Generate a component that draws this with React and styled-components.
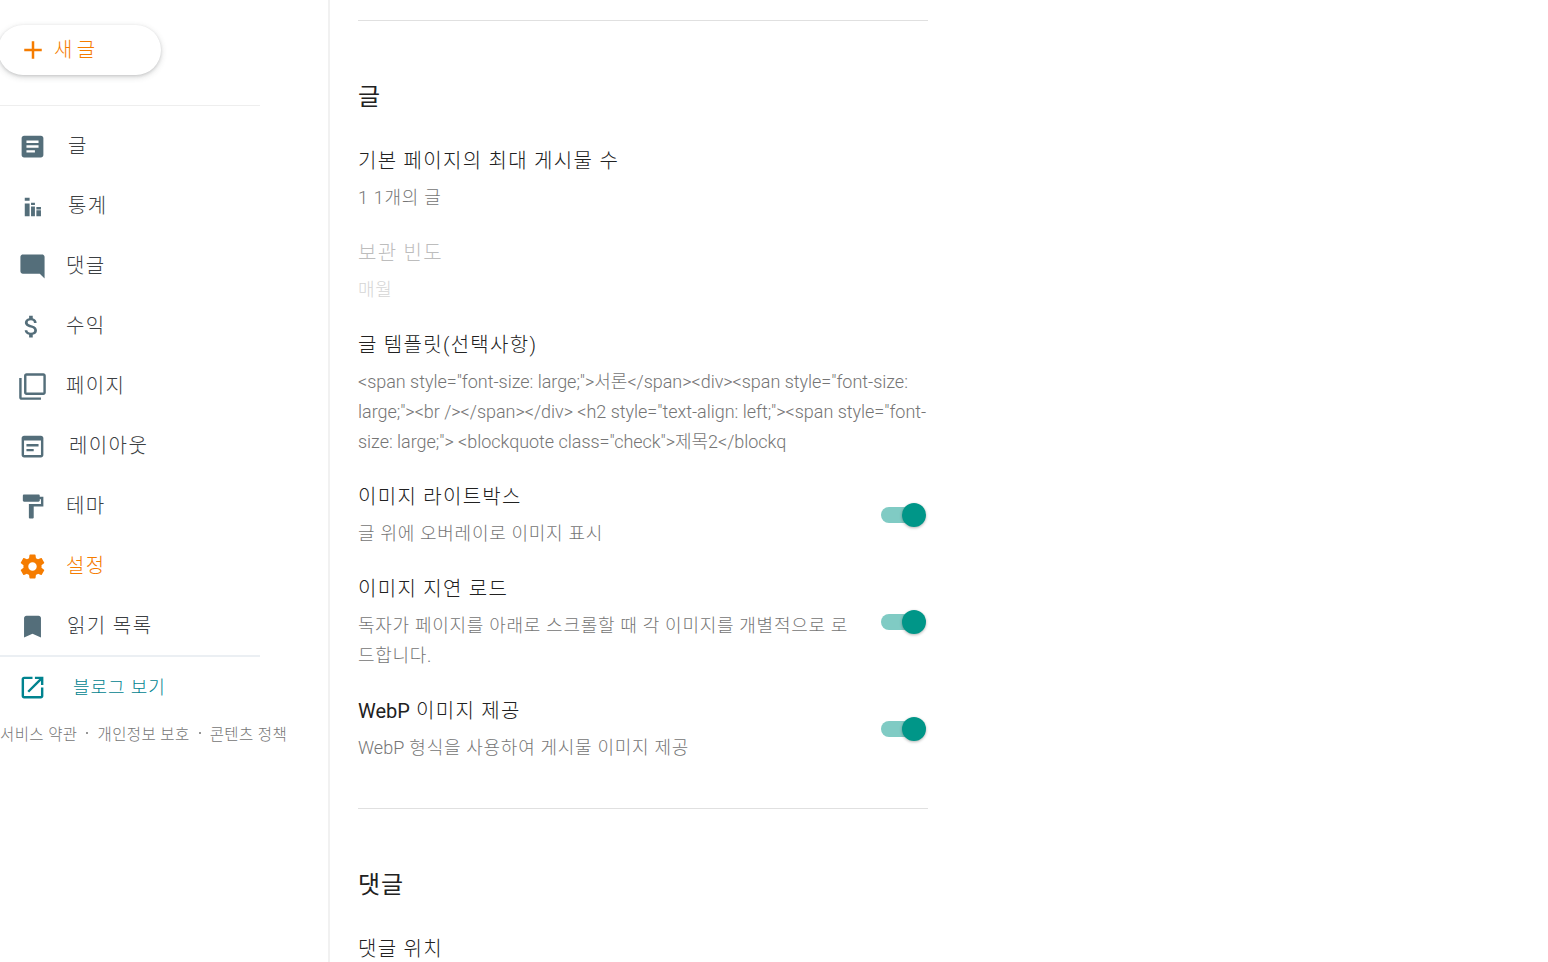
import styled, { createGlobalStyle } from "styled-components";

const GlobalStyle = createGlobalStyle`
  html, body {
    margin: 0;
    height: 100%;
    overflow: hidden;
    background: #fff;
    font-family: Roboto, "Noto Sans CJK KR", sans-serif;
  }
`;

const Page = styled.div`
  display: flex;
  height: 962px;
  overflow: hidden;
`;

const Sidebar = styled.aside`
  width: 328px;
  flex-shrink: 0;
  border-right: 2px solid #f1f1f1;
  padding-top: 25px;
`;

const NewPost = styled.button`
  display: flex;
  align-items: center;
  width: 163px;
  height: 50px;
  margin-left: -2px;
  padding: 0 0 3px 20px;
  gap: 6px;
  border: none;
  border-radius: 25px;
  background: #fff;
  color: #f57c00;
  font-family: inherit;
  font-size: 20px;
  font-weight: 300;
  letter-spacing: 1.3px;
  word-spacing: -3px;
  box-shadow: 0 1px 3px rgba(60, 64, 67, 0.16), 0 2px 6px rgba(60, 64, 67, 0.2);
`;

const PlusIcon = styled.svg`
  width: 30px;
  height: 30px;
  margin-top: 3px;
  flex-shrink: 0;
  fill: #f57c00;
`;

const Divider = styled.div`
  width: 260px;
  height: ${(p) => (p.$thick ? 2 : 1)}px;
  background: ${(p) => (p.$thick ? "#ebeff3" : "#eeeeee")};
`;

const TopDivider = styled(Divider)`
  margin: 30px 0 9px;
`;

const Nav = styled.nav`
  display: flex;
  flex-direction: column;
`;

const NavItem = styled.a`
  display: flex;
  align-items: center;
  height: 60px;
  padding-left: 18px;
  color: ${(p) => (p.$active ? "#f57c00" : "#3c4043")};
  font-size: 20px;
  font-weight: 300;
  letter-spacing: 1.4px;
`;

const NavIcon = styled.svg`
  width: 29px;
  height: 29px;
  margin-top: 2px;
  flex-shrink: 0;
  fill: ${(p) => p.$color || "#546e7a"};
`;

const NavLabel = styled.span`
  margin-left: ${(p) => p.$gap}px;
  padding-bottom: 2px;
`;

const BlogLabel = styled(NavLabel)`
  padding-bottom: 0;
`;

const BlogLink = styled.a`
  display: flex;
  align-items: center;
  height: 58px;
  padding-left: 18px;
  color: #00838f;
  font-size: 18px;
  font-weight: 300;
  letter-spacing: 0.9px;
`;

const FooterLinks = styled.div`
  display: flex;
  align-items: center;
  margin-top: 7px;
  white-space: nowrap;
  color: #757575;
  font-size: 15.5px;
  font-weight: 300;
  letter-spacing: 0.4px;
`;

const Dot = styled.span`
  width: 2px;
  height: 2px;
  margin: 0 9px;
  border-radius: 50%;
  background: #757575;
`;

const Main = styled.main`
  width: 570px;
  margin-left: 28px;
  padding-top: 20px;
`;

const Section = styled.section`
  border-top: 1px solid #e0e0e0;
  padding-top: 58px;
  padding-bottom: 45px;
`;

const SectionTitle = styled.h2`
  margin: 0 0 31px;
  height: 36px;
  line-height: 36px;
  color: #212121;
  font-size: 24px;
  font-weight: 400;
  letter-spacing: 0.8px;
`;

const Row = styled.div`
  display: flex;
  align-items: center;
  justify-content: space-between;
  margin-bottom: ${(p) => p.$mb ?? 25}px;
`;

const RowText = styled.div`
  width: ${(p) => (p.$toggle ? "495px" : "100%")};
`;

const RowTitle = styled.div`
  color: ${(p) => (p.$disabled ? "#bdbdbd" : "#212121")};
  height: 30px;
  line-height: 30px;
  margin-bottom: 7px;
  font-size: 20px;
  font-weight: 300;
  letter-spacing: 1.3px;
  white-space: nowrap;
`;

const RowDesc = styled.div`
  color: ${(p) => (p.$disabled ? "#d5d5d5" : "#757575")};
  line-height: 30px;
  font-size: 18px;
  font-weight: 300;
  letter-spacing: 0.72px;
`;

const Template = styled.div`
  color: #757575;
  line-height: 30px;
  font-size: 18px;
  font-weight: 300;
  letter-spacing: -0.03px;
`;

const Latin = styled.span`
  font-weight: ${(p) => p.$weight || 300};
  letter-spacing: 0;
`;

const Toggle = styled.div`
  position: relative;
  width: 45px;
  height: 24px;
  margin: 0 2px 2px 0;
  flex-shrink: 0;
  &::before {
    content: "";
    position: absolute;
    left: 0;
    top: 4px;
    width: 36px;
    height: 16px;
    border-radius: 8px;
    background: #80cbc4;
  }
  &::after {
    content: "";
    position: absolute;
    right: 0;
    top: 0;
    width: 24px;
    height: 24px;
    border-radius: 50%;
    background: #009688;
    box-shadow: 0 1px 3px rgba(0, 0, 0, 0.3);
  }
`;

const navItems = [
  { label: "글", gap: 21, path: "M19 3H5c-1.1 0-2 .9-2 2v14c0 1.1.9 2 2 2h14c1.1 0 2-.9 2-2V5c0-1.1-.9-2-2-2zm-5 14H7v-2h7v2zm3-4H7v-2h10v2zm0-4H7V7h10v2z" },
  { label: "통계", gap: 21, path: "M5.6 4.8h4v2.4h-4zM5.6 9.6h4V20h-4zM10.8 8.8H14v2h-3.2zM10.8 12H14v8h-3.2zM15.2 12.4H19v2h-3.8zM15.2 15.2H19V20h-3.8z" },
  { label: "댓글", gap: 19, path: "M21.99 4c0-1.1-.89-2-1.99-2H4c-1.1 0-2 .9-2 2v12c0 1.1.9 2 2 2h14l4 4-.01-18z" },
  { label: "수익", gap: 19, view: "0.8 0 24 24", path: "M11.8 10.9c-2.27-.59-3-1.2-3-2.15 0-1.09 1.01-1.85 2.7-1.85 1.78 0 2.44.85 2.5 2.1h2.21c-.07-1.72-1.12-3.3-3.21-3.81V3h-3v2.16c-1.94.42-3.5 1.68-3.5 3.61 0 2.31 1.91 3.46 4.7 4.13 2.5.6 3 1.48 3 2.41 0 .69-.49 1.79-2.7 1.79-2.06 0-2.87-.92-2.98-2.1h-2.2c.12 2.19 1.76 3.42 3.68 3.83V21h3v-2.15c1.95-.37 3.5-1.5 3.5-3.55 0-2.84-2.43-3.81-4.7-4.4z" },
  { label: "페이지", gap: 19, path: "M3 5H1v16c0 1.1.9 2 2 2h16v-2H3V5zm18-4H7c-1.1 0-2 .9-2 2v14c0 1.1.9 2 2 2h14c1.1 0 2-.9 2-2V3c0-1.1-.9-2-2-2zm0 16H7V3h14v14z" },
  { label: "레이아웃", gap: 22, path: "M19 3H5c-1.1 0-2 .9-2 2v14c0 1.1.9 2 2 2h14c1.1 0 2-.9 2-2V5c0-1.1-.9-2-2-2zm0 16H5V7h14v12zM7 10h10v2H7zm0 4h6v2H7z" },
  { label: "테마", gap: 19, path: "M18 4V3c0-.55-.45-1-1-1H5c-.55 0-1 .45-1 1v4c0 .55.45 1 1 1h12c.55 0 1-.45 1-1V6h1v4H9v11c0 .55.45 1 1 1h2c.55 0 1-.45 1-1v-9h8V4h-3z" },
  { label: "설정", gap: 19, active: true, color: "#f57c00", path: "M19.43 12.98c.04-.32.07-.64.07-.98s-.03-.66-.07-.98l2.11-1.65c.19-.15.24-.42.12-.64l-2-3.46c-.12-.22-.39-.3-.61-.22l-2.49 1c-.52-.4-1.08-.73-1.69-.98l-.38-2.65C14.46 2.18 14.25 2 14 2h-4c-.25 0-.46.18-.49.42l-.38 2.65c-.61.25-1.17.59-1.69.98l-2.49-1c-.23-.09-.49 0-.61.22l-2 3.46c-.13.22-.07.49.12.64l2.11 1.65c-.04.32-.07.65-.07.98s.03.66.07.98l-2.11 1.65c-.19.15-.24.42-.12.64l2 3.46c.12.22.39.3.61.22l2.49-1c.52.4 1.08.73 1.69.98l.38 2.65c.03.24.24.42.49.42h4c.25 0 .46-.18.49-.42l.38-2.65c.61-.25 1.17-.59 1.69-.98l2.49 1c.23.09.49 0 .61-.22l2-3.46c.12-.22.07-.49-.12-.64l-2.11-1.65zM12 15.5c-1.93 0-3.5-1.57-3.5-3.5s1.57-3.5 3.5-3.5 3.5 1.57 3.5 3.5-1.57 3.5-3.5 3.5z" },
  { label: "읽기 목록", gap: 20, path: "M17 3H7c-1.1 0-1.99.9-1.99 2L5 21l7-3 7 3V5c0-1.1-.9-2-2-2z" },
];

function Icon({ path, color, view = "0 0 24 24" }) {
  return (
    <NavIcon viewBox={view} $color={color}>
      <path d={path} />
    </NavIcon>
  );
}

function App() {
  return (
    <Page>
      <GlobalStyle />
      <Sidebar>
        <NewPost>
          <PlusIcon viewBox="0 0 24 24">
            <path d="M19 13h-6v6h-2v-6H5v-2h6V5h2v6h6v2z" />
          </PlusIcon>
          새 글
        </NewPost>
        <TopDivider />
        <Nav>
          {navItems.map((item) => (
            <NavItem key={item.label} $active={item.active}>
              <Icon path={item.path} color={item.color} view={item.view} />
              <NavLabel $gap={item.gap}>{item.label}</NavLabel>
            </NavItem>
          ))}
        </Nav>
        <Divider $thick />
        <BlogLink>
          <Icon color="#00838f" path="M19 19H5V5h7V3H5c-1.11 0-2 .9-2 2v14c0 1.1.89 2 2 2h14c1.1 0 2-.9 2-2v-7h-2v7zM14 3v2h3.59l-9.83 9.83 1.41 1.41L19 6.41V10h2V3h-7z" />
          <BlogLabel $gap={26}>블로그 보기</BlogLabel>
        </BlogLink>
        <FooterLinks>
          <span>서비스 약관</span>
          <Dot />
          <span>개인정보 보호</span>
          <Dot />
          <span>콘텐츠 정책</span>
        </FooterLinks>
      </Sidebar>
      <Main>
        <Section>
          <SectionTitle>글</SectionTitle>
          <Row>
            <RowText>
              <RowTitle>기본 페이지의 최대 게시물 수</RowTitle>
              <RowDesc>1 1개의 글</RowDesc>
            </RowText>
          </Row>
          <Row>
            <RowText>
              <RowTitle $disabled>보관 빈도</RowTitle>
              <RowDesc $disabled>매월</RowDesc>
            </RowText>
          </Row>
          <Row>
            <RowText>
              <RowTitle>글 템플릿(선택사항)</RowTitle>
              <Template>
                {'<span style="font-size: large;">서론</span><div><span style="font-size: large;"><br /></span></div> <h2 style="text-align: left;"><span style="font-size: large;"> <blockquote class="check">제목2</blockq'}
              </Template>
            </RowText>
          </Row>
          <Row>
            <RowText $toggle>
              <RowTitle>이미지 라이트박스</RowTitle>
              <RowDesc>글 위에 오버레이로 이미지 표시</RowDesc>
            </RowText>
            <Toggle />
          </Row>
          <Row>
            <RowText $toggle>
              <RowTitle>이미지 지연 로드</RowTitle>
              <RowDesc>독자가 페이지를 아래로 스크롤할 때 각 이미지를 개별적으로 로드합니다.</RowDesc>
            </RowText>
            <Toggle />
          </Row>
          <Row $mb={0}>
            <RowText $toggle>
              <RowTitle><Latin $weight={400}>WebP</Latin> 이미지 제공</RowTitle>
              <RowDesc><Latin>WebP</Latin> 형식을 사용하여 게시물 이미지 제공</RowDesc>
            </RowText>
            <Toggle />
          </Row>
        </Section>
        <Section>
          <SectionTitle>댓글</SectionTitle>
          <Row>
            <RowText>
              <RowTitle>댓글 위치</RowTitle>
            </RowText>
          </Row>
        </Section>
      </Main>
    </Page>
  );
}

export default App;
